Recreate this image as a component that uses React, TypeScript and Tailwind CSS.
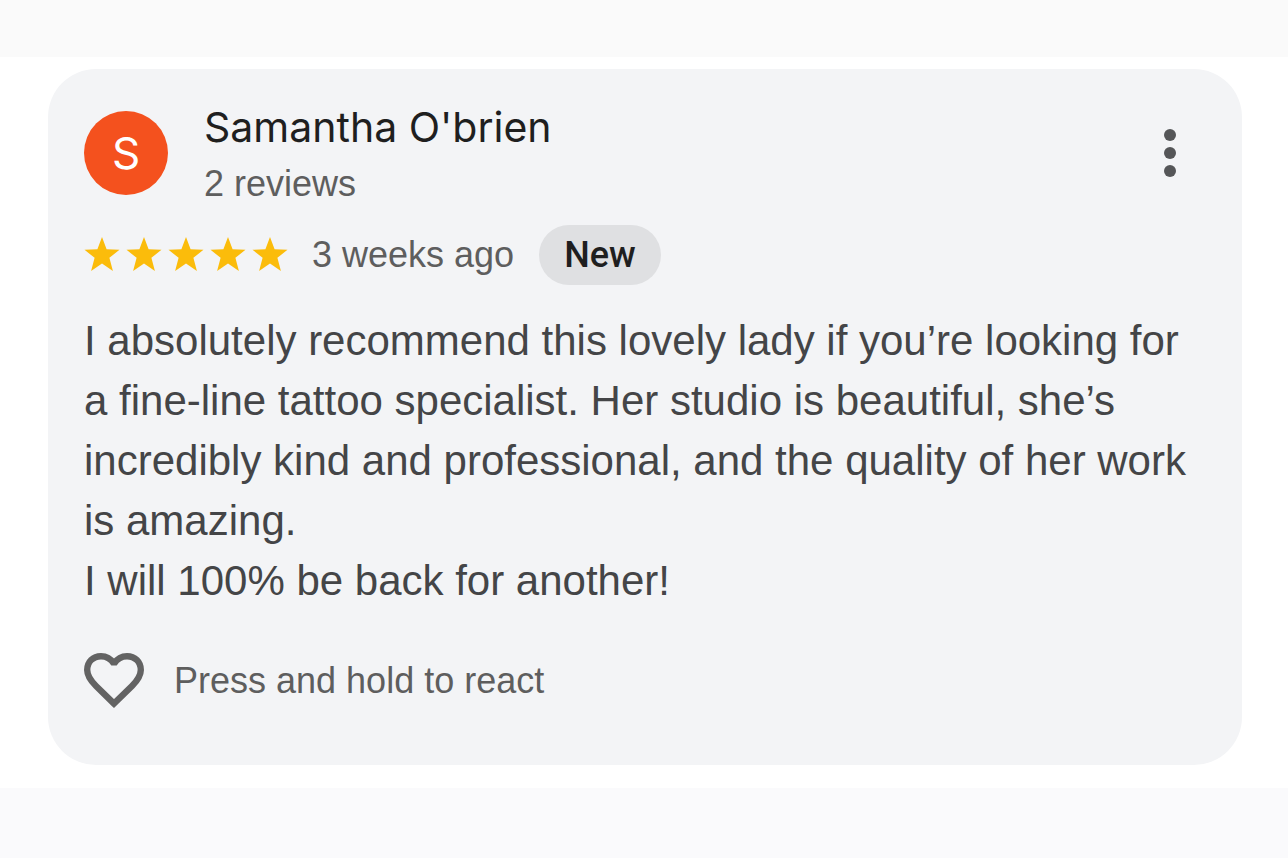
const reviewer = {
  name: "Samantha O'brien",
  count: '2 reviews',
  date: '3 weeks ago',
  rating: 5,
}

const comment = [
  'I absolutely recommend this lovely lady if you’re looking for a fine-line tattoo specialist. Her studio is beautiful, she’s incredibly kind and professional, and the quality of her work is amazing.',
  'I will 100% be back for another!',
]

function Star() {
  return (
    <svg viewBox="0 0 36 36" className="size-9" fill="#fbbc0b" aria-hidden="true">
      <path d="M18 0 22.6 12.3 35.5 12.8 25.4 20.8 28.9 34 18 26.6 7.1 34 10.6 20.8.5 12.8 13.4 12.3z" />
    </svg>
  )
}

export default function App() {
  return (
    <div className="min-h-screen bg-[#fafafc] font-['Liberation_Sans',Arial,sans-serif]">
      <div className="h-[57px] bg-[#fafafa]" />
      <main className="bg-white pl-12 pr-[46px] pt-3 pb-[23px]">
        <article className="rounded-[48px] bg-[#f3f4f6] px-9 pt-8 pb-[54px]">
          <header className="flex items-start">
            <div className="mt-[10px] flex size-[84px] items-center justify-center rounded-full bg-[#f4511e] font-[Inter,sans-serif] text-[44px] leading-none text-white">
              S
            </div>
            <div className="ml-9 flex-1">
              <h1 className="font-[Inter,sans-serif] text-[41px] leading-[52px] text-[#1f1f1f]">{reviewer.name}</h1>
              <p className="text-4xl leading-[62px] text-[#5e5e5e]">{reviewer.count}</p>
            </div>
            <button aria-label="More options" className="mt-[18px] mr-5 p-2">
              <svg viewBox="0 0 16 52" className="w-4 h-[52px]" fill="#555658">
                <circle cx="8" cy="8" r="6" />
                <circle cx="8" cy="26" r="6" />
                <circle cx="8" cy="44" r="6" />
              </svg>
            </button>
          </header>

          <div className="mt-[10px] flex items-center">
            <div className="flex gap-[6px]" role="img" aria-label="5 stars">
              {Array.from({ length: reviewer.rating }, (_, i) => <Star key={i} />)}
            </div>
            <span className="ml-6 text-4xl text-[#5e5e5e]">{reviewer.date}</span>
            <span className="ml-[25px] rounded-full bg-[#dfe0e2] px-[25px] font-[Roboto,sans-serif] text-4xl leading-[60px] font-medium text-[#1f1f1f]">New</span>
          </div>

          <div className="mt-[26px] text-[42px] leading-[60px] text-[#444547]">
            {comment.map((line) => <p key={line}>{line}</p>)}
          </div>

          <button className="mt-10 flex items-center text-4xl leading-[60px] text-[#5e5e5e]">
            <svg viewBox="0 0 60 56" className="mr-[30px] w-[60px] h-14" fill="none" stroke="#636363" strokeWidth="6.4" strokeMiterlimit="1.5" aria-hidden="true">
              <path d="M30 50.6 12 33C6 27 3.2 22.4 3.2 17 3.2 9 9 3.2 17 3.2c5.4 0 9.8 2.6 13 7.4 3.2-4.8 7.6-7.4 13-7.4 8 0 13.8 5.8 13.8 13.8 0 5.4-2.8 10-8.8 16z" />
            </svg>
            Press and hold to react
          </button>
        </article>
      </main>
    </div>
  )
}
